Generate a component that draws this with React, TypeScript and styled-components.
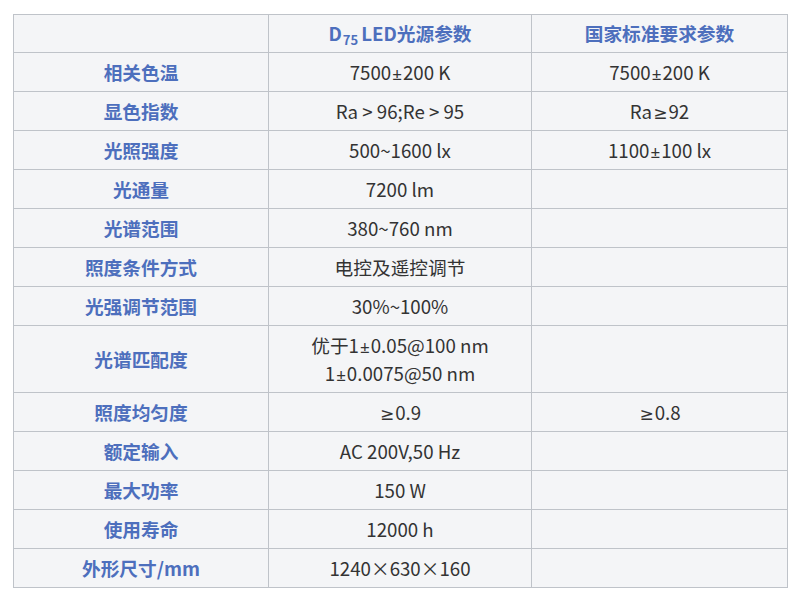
import React from "react";
import styled, { createGlobalStyle } from "styled-components";

const GlobalStyle = createGlobalStyle`
  body {
    margin: 0;
    background: #ffffff;
    font-family: "Noto Sans CJK SC", "Noto Sans", sans-serif;
  }
`;

// narrow latin glyphs for ± and ≥ (CJK font draws them full width)
const Sym = styled.span`
  font-family: "Noto Sans", "DejaVu Sans", sans-serif;
  font-size: 17px;
  line-height: 0;
  margin: 0 1px;
`;

type Row = { label: string; value: React.ReactNode; standard?: React.ReactNode };

const pm = <Sym>±</Sym>;
const ge = <Sym>≥</Sym>;

const rows: Row[] = [
  { label: "相关色温", value: <>7500{pm}200 K</>, standard: <>7500{pm}200 K</> },
  { label: "显色指数", value: "Ra > 96;Re > 95", standard: <>Ra{ge}92</> },
  { label: "光照强度", value: "500~1600 lx", standard: <>1100{pm}100 lx</> },
  { label: "光通量", value: "7200 lm" },
  { label: "光谱范围", value: "380~760 nm" },
  { label: "照度条件方式", value: "电控及遥控调节" },
  { label: "光强调节范围", value: "30%~100%" },
  {
    label: "光谱匹配度",
    value: (
      <>
        优于1{pm}0.05@100 nm
        <br />
        1{pm}0.0075@50 nm
      </>
    ),
  },
  { label: "照度均匀度", value: <>{ge}0.9</>, standard: <>{ge}0.8</> },
  { label: "额定输入", value: "AC 200V,50 Hz" },
  { label: "最大功率", value: "150 W" },
  { label: "使用寿命", value: "12000 h" },
  { label: "外形尺寸/mm", value: "1240×630×160" },
];

const App = () => {
  return (
    <Page>
      <GlobalStyle />
      <SpecTable>
        <colgroup>
          <col style={{ width: 255 }} />
          <col style={{ width: 263 }} />
          <col style={{ width: 256 }} />
        </colgroup>
        <thead>
          <tr>
            <HeadCell />
            <HeadCell>
              D<Sub>75</Sub>LED光源参数
            </HeadCell>
            <HeadCell>国家标准要求参数</HeadCell>
          </tr>
        </thead>
        <tbody>
          {rows.map((r) => (
            <tr key={r.label}>
              <LabelCell>{r.label}</LabelCell>
              <ValueCell>{r.value}</ValueCell>
              <ValueCell>{r.standard ?? ""}</ValueCell>
            </tr>
          ))}
        </tbody>
      </SpecTable>
    </Page>
  );
};

export default App;

const Page = styled.div`
  padding: 14px 13px;
`;

const SpecTable = styled.table`
  width: 774px;
  border-collapse: collapse;
  table-layout: fixed;
  background-color: #f4f5f7;
  font-size: 18.7px;
  line-height: 28px;
`;

const HeadCell = styled.th`
  border: 1px solid #bfc3c9;
  padding: 4px 8px 5px;
  height: 28px;
  color: #4d6fbd;
  font-weight: 700;
  text-align: center;
`;

const Sub = styled.sub`
  display: inline-block;
  font-size: 13px;
  vertical-align: -4px;
  line-height: 14px;
  margin: 0 3px 0 1px;
`;

const LabelCell = styled.td`
  border: 1px solid #bfc3c9;
  padding: 5px 8px;
  height: 28px;
  color: #4d6fbd;
  font-weight: 700;
  text-align: center;
`;

const ValueCell = styled.td`
  border: 1px solid #bfc3c9;
  padding: 5px 8px;
  height: 28px;
  color: #333333;
  text-align: center;
`;
